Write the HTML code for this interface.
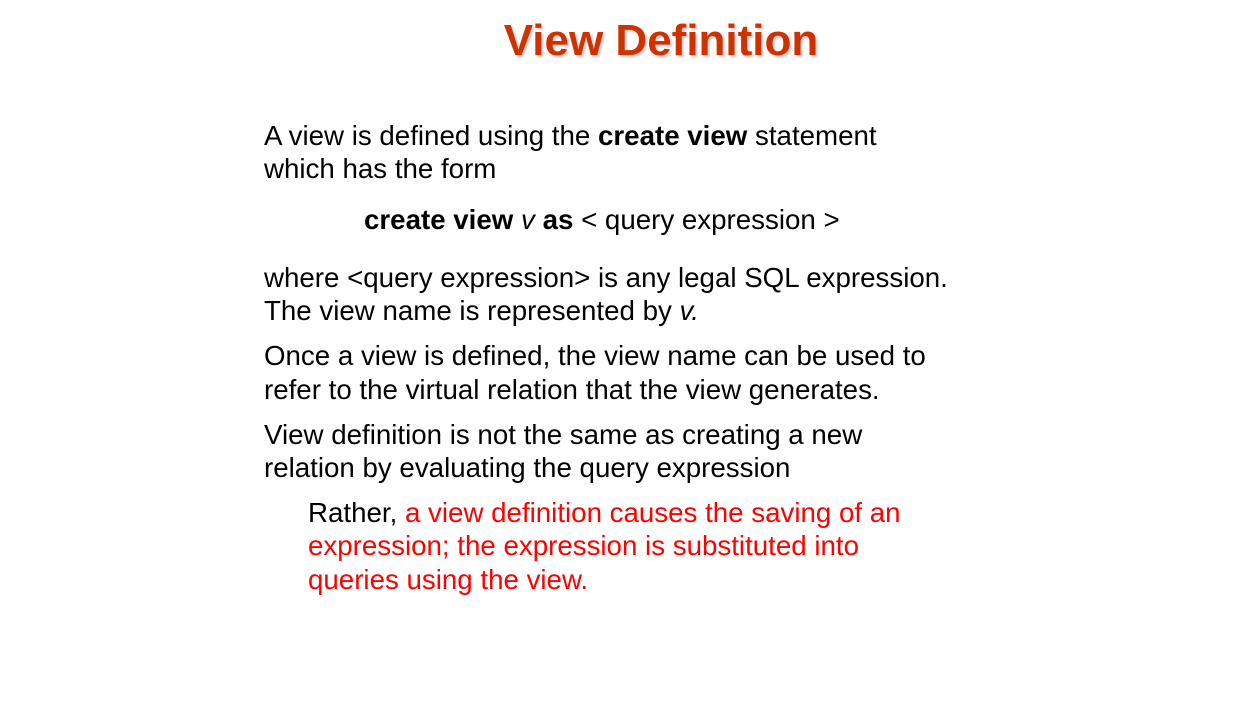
<html><head><style>
body{margin:0;width:1254px;height:706px;background:#fff;font-family:"Liberation Sans",Arial,sans-serif;position:relative;overflow:hidden}
.t{position:absolute;text-align:center;top:16px;font-size:44px;font-weight:bold;color:#cc3300;text-shadow:2px 2px 2px #ccc;left:68px;width:1186px}
.l{position:absolute;font-size:27.7px;color:#000;white-space:nowrap;line-height:28px}
.r{color:#ff0000}
</style></head><body>
<div class="t">View Definition</div>
<div class="l" style="left:264px;top:122px">A view is defined using the <b>create view</b> statement</div>
<div class="l" style="left:264px;top:155px">which has the form</div>
<div class="l" style="left:364px;top:206px"><b>create view</b> <i>v</i> <b>as</b> &lt; query expression &gt;</div>
<div class="l" style="left:264px;top:264px">where &lt;query expression&gt; is any legal SQL expression.</div>
<div class="l" style="left:264px;top:297px">The view name is represented by <i>v.</i></div>
<div class="l" style="left:264px;top:342px">Once a view is defined, the view name can be used to</div>
<div class="l" style="left:264px;top:376px">refer to the virtual relation that the view generates.</div>
<div class="l" style="left:264px;top:421px">View definition is not the same as creating a new</div>
<div class="l" style="left:264px;top:454px">relation by evaluating the query expression</div>
<div class="l" style="left:308px;top:499px">Rather, <span class="r">a view definition causes the saving of an</span></div>
<div class="l r" style="left:308px;top:532px">expression; the expression is substituted into</div>
<div class="l r" style="left:308px;top:566px">queries using the view.</div>
</body></html>
